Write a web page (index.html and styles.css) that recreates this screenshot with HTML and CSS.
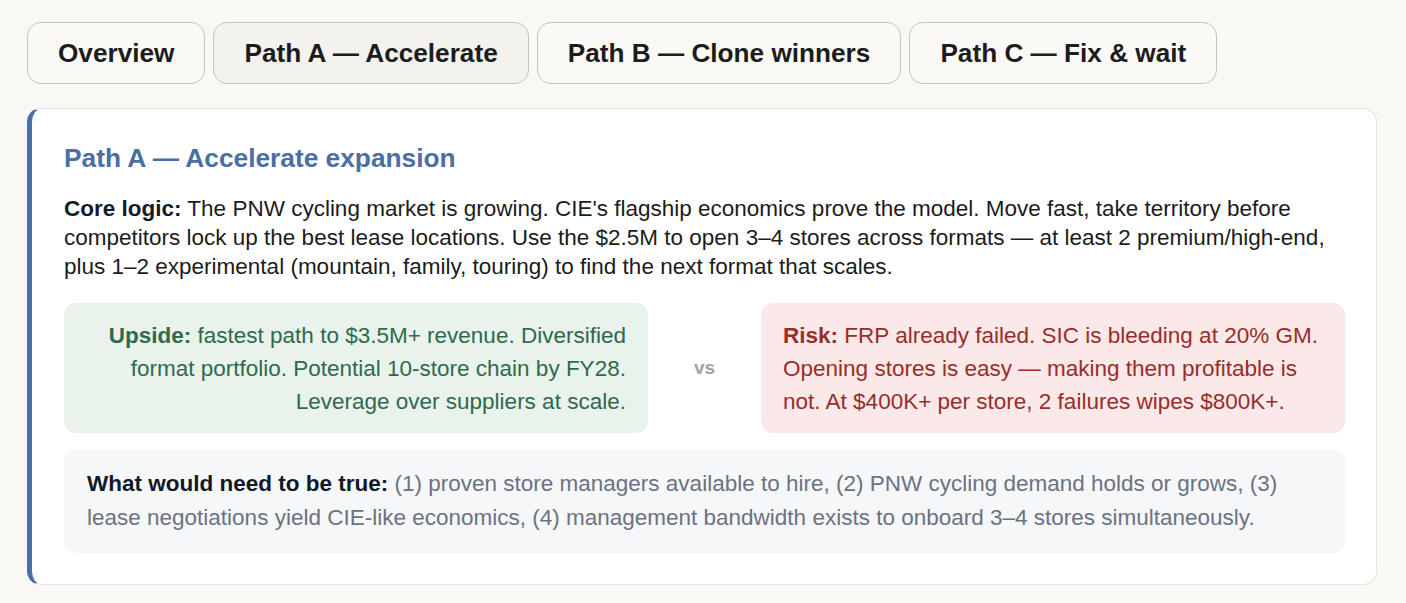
FILE: index.html
```html
<!DOCTYPE html>
<html lang="en">
<head>
<meta charset="utf-8">
<title>Paths</title>
<link rel="stylesheet" href="styles.css">
</head>
<body>
<div class="page">
  <nav class="tabs">
    <button class="tab">Overview</button>
    <button class="tab active">Path A — Accelerate</button>
    <button class="tab">Path B — Clone winners</button>
    <button class="tab">Path C — Fix &amp; wait</button>
  </nav>
  <section class="card">
    <h2 class="title">Path A — Accelerate expansion</h2>
    <p class="logic"><strong>Core logic:</strong> The PNW cycling market is growing. CIE's flagship economics prove the model. Move fast, take territory before competitors lock up the best lease locations. Use the $2.5M to open 3–4 stores across formats — at least 2 premium/high-end, plus 1–2 experimental (mountain, family, touring) to find the next format that scales.</p>
    <div class="compare">
      <div class="box upside"><strong>Upside:</strong> fastest path to $3.5M+ revenue. Diversified format portfolio. Potential 10-store chain by FY28. Leverage over suppliers at scale.</div>
      <div class="vs">vs</div>
      <div class="box risk"><strong>Risk:</strong> FRP already failed. SIC is bleeding at 20% GM. Opening stores is easy — making them profitable is not. At $400K+ per store, 2 failures wipes $800K+.</div>
    </div>
    <div class="need"><strong>What would need to be true:</strong> (1) proven store managers available to hire, (2) PNW cycling demand holds or grows, (3) lease negotiations yield CIE-like economics, (4) management bandwidth exists to onboard 3–4 stores simultaneously.</div>
  </section>
</div>
</body>
</html>
```

FILE: styles.css
```css
* { box-sizing: border-box; }
html, body { margin: 0; padding: 0; }
body {
  background: #f9f8f4;
  font-family: "Liberation Sans", Arial, sans-serif;
  color: #1c1c1c;
}
.page {
  padding: 22px 29px 0 27px;
}
.tabs {
  display: flex;
  gap: 8px;
  margin-bottom: 24px;
}
.tab {
  font-family: "Liberation Sans", Arial, sans-serif;
  font-size: 26.2px;
  font-weight: 700;
  color: #1c1c1c;
  background: #faf9f6;
  border: 1px solid #c6c4bd;
  border-radius: 14px;
  height: 62px;
  padding: 0 30px;
  line-height: 1;
  cursor: pointer;
}
.tab.active {
  background: #f3f2ec;
}
.card {
  background: #ffffff;
  border: 1px solid #e6e4df;
  border-left: 5px solid #4a6fa5;
  border-radius: 14px;
  padding: 34px 31px 31px 32px;
}
.title {
  margin: 0 0 20px;
  font-size: 26.3px;
  line-height: 31px;
  font-weight: 700;
  color: #4a6fa5;
}
.logic {
  margin: 0 0 22px;
  font-size: 22.5px;
  line-height: 29px;
  color: #1c1c1c;
}
.logic strong {
  color: #121a2c;
}
.compare {
  display: grid;
  grid-template-columns: 1fr auto 1fr;
  gap: 46px;
  align-items: stretch;
  margin-bottom: 16px;
}
.box {
  border-radius: 12px;
  padding: 16px 22px 15px;
  font-size: 22.5px;
  line-height: 33px;
}
.upside {
  background: #e9f2eb;
  color: #2f6a4c;
  text-align: right;
}
.risk {
  background: #fbe8e8;
  color: #9a2d2a;
}
.vs {
  align-self: center;
  font-size: 19px;
  font-weight: 700;
  color: #9ea4b2;
}
.need {
  background: #f6f7f9;
  border-radius: 12px;
  padding: 18px 23px 18px;
  font-size: 22.5px;
  line-height: 34px;
  color: #6b7280;
}
.need strong {
  color: #111827;
}
```
